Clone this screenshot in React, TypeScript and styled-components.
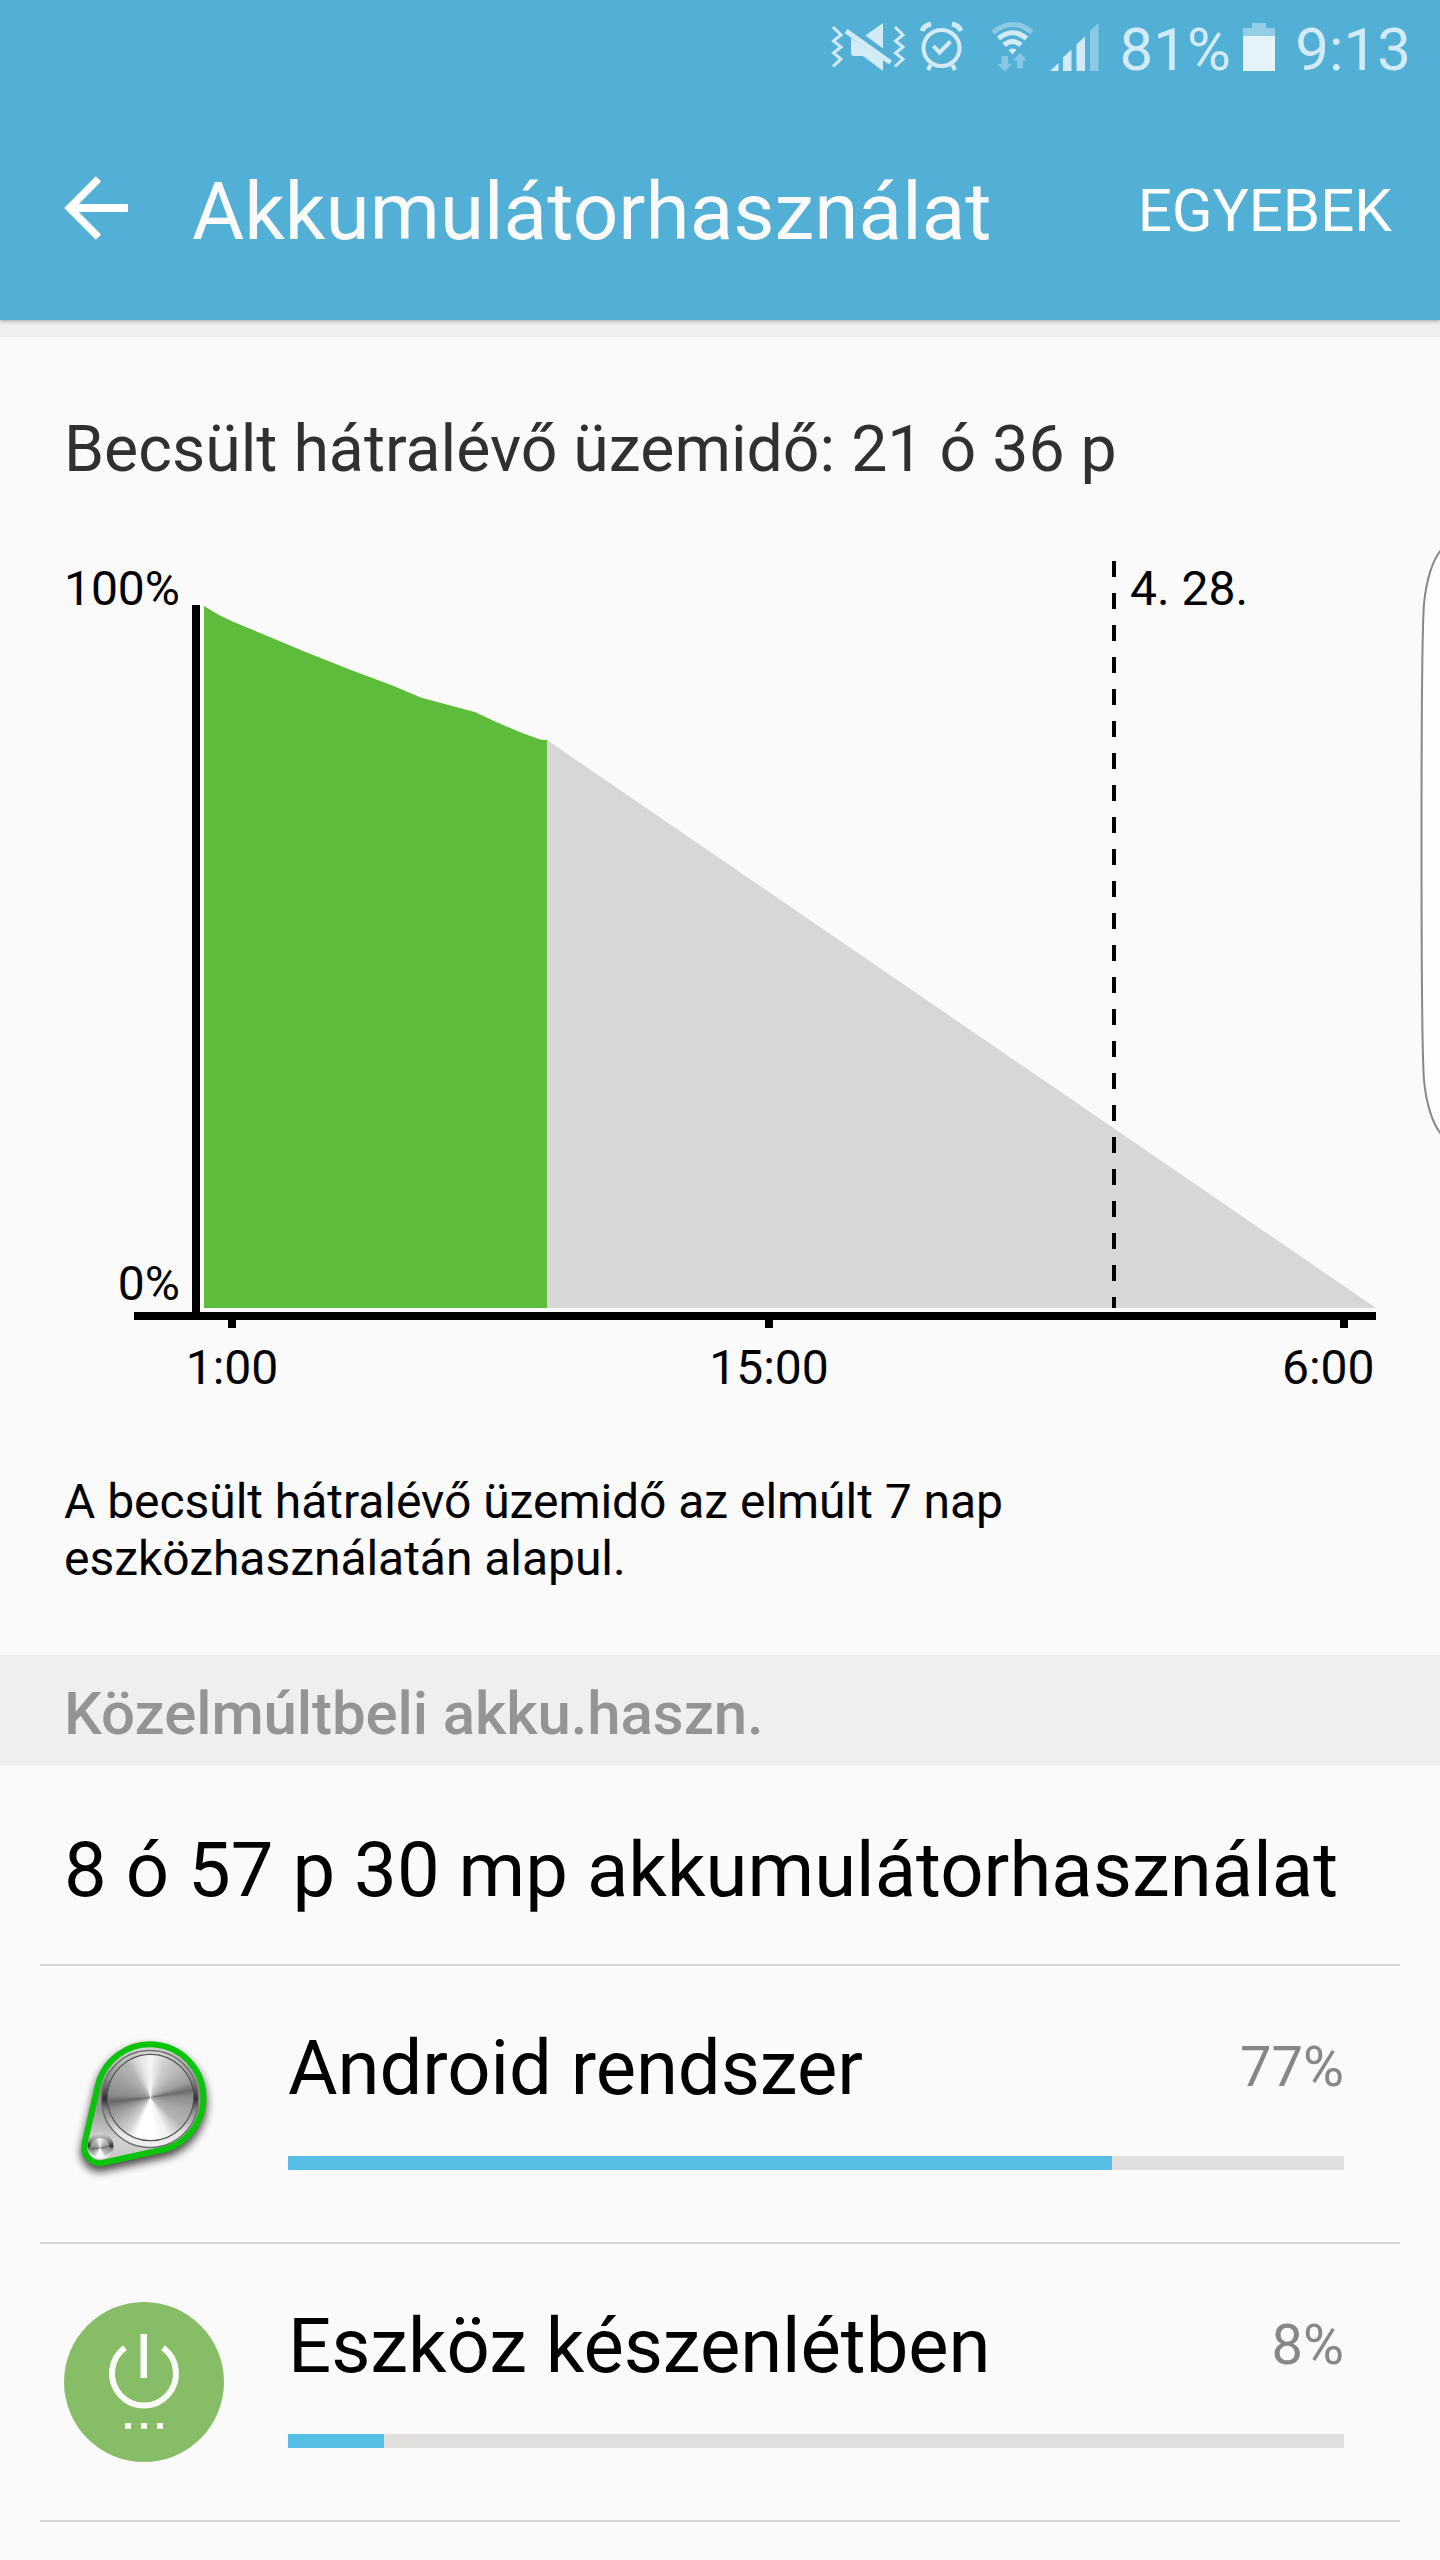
import React from 'react';
import styled, { createGlobalStyle } from 'styled-components';

const GlobalStyle = createGlobalStyle`
  *, *::before, *::after { box-sizing: border-box; }
  body { margin: 0; background: #fafafa; }
`;

const Screen = styled.div`
  position: relative;
  display: flex;
  flex-direction: column;
  width: 1440px;
  height: 2560px;
  overflow: hidden;
  background: #fafafa;
  color: #000;
  font-family: Roboto, "Noto Sans", sans-serif;
`;

const Header = styled.header`
  position: relative;
  display: flex;
  flex-direction: column;
  height: 320px;
  flex: none;
  background: #52afd5;
  box-shadow: 0 1px 4px rgba(0, 0, 0, 0.34);
`;

const StatusBar = styled.div`
  display: flex;
  justify-content: flex-end;
  height: 96px;
  padding-right: 29px;
  color: #d2ebf7;
  font-size: 60px;
  line-height: 99px;
`;

const StatusIcons = styled.svg`
  display: block;
  flex: none;
`;

const StatusText = styled.span<{ $width: number }>`
  width: ${(p) => p.$width}px;
  text-align: right;
  white-space: nowrap;
`;

const BatteryLevel = styled(StatusText)`
  margin-right: 11px;
`;

const Toolbar = styled.div`
  display: flex;
  align-items: center;
  height: 224px;
  padding: 0 48px 0 64px;
`;

const Title = styled.h1`
  flex: 1;
  margin: 0;
  padding: 7px 0 0 64px;
  color: #fafafa;
  font-size: 80px;
  font-weight: 400;
  letter-spacing: 0.07px;
  line-height: 94px;
`;

const MenuButton = styled.button`
  border: 0;
  padding: 5px 0 0;
  background: none;
  color: #fff;
  font: inherit;
  font-size: 60px;
  line-height: 72px;
`;

const Strip = styled.div`
  height: 17px;
  flex: none;
  background: #efefef;
`;

const Estimate = styled.section`
  display: flex;
  flex-direction: column;
  height: 1318px;
  flex: none;
`;

const EstimateTitle = styled.h2`
  margin: 74px 0 0 64px;
  color: #303030;
  font-size: 64.4px;
  font-weight: 400;
  line-height: 76px;
`;

const ChartSvg = styled.svg`
  display: block;
  margin-top: 53px;
  flex: none;
  font-size: 48px;
`;

const Caption = styled.p`
  margin: 73px 64px 0;
  font-size: 48px;
  letter-spacing: -0.04px;
  line-height: 57px;
`;

const SectionHeader = styled.h3`
  height: 111px;
  flex: none;
  margin: 0;
  padding-left: 64px;
  background: #efefef;
  color: #949494;
  font-size: 60px;
  font-weight: 500;
  letter-spacing: -0.09px;
  line-height: 117px;
`;

const UsageList = styled.section`
  display: flex;
  flex-direction: column;
  padding: 0 40px;
`;

const Summary = styled.div`
  height: 200px;
  padding-left: 24px;
  border-bottom: 2px solid #d8d8d8;
  font-size: 76px;
  letter-spacing: 0.06px;
  line-height: 208px;
  white-space: nowrap;
`;

const Row = styled.div`
  display: flex;
  gap: 64px;
  height: 278px;
  padding: 57px 56px 0 24px;
  border-bottom: 2px solid #d8d8d8;
`;

const RowIcon = styled.svg`
  display: block;
  flex: none;
  margin-top: 1px;
  overflow: visible;
`;

const RowBody = styled.div`
  flex: 1;
`;

const RowLine = styled.div`
  display: flex;
  justify-content: space-between;
  align-items: flex-start;
  height: 90px;
`;

const Name = styled.span`
  font-size: 76px;
  letter-spacing: -0.04px;
  line-height: 90px;
`;

const Percent = styled.span`
  color: #868788;
  font-size: 56px;
  line-height: 88px;
`;

const Track = styled.div`
  height: 14px;
  margin-top: 43px;
  background: #e1e0de;
`;

const Fill = styled.div`
  height: 100%;
  background: #56bee4;
`;

const EdgeHandle = styled.svg`
  position: absolute;
  top: 540px;
  right: 0;
`;

const BrushedMetal = styled.div`
  width: 100%;
  height: 100%;
  border-radius: 50%;
  background: conic-gradient(
    #f6f6f6 0deg, #cfcfcf 22deg, #b2b2b2 50deg, #9c9c9c 68deg, #6c6c6c 80deg, #8e8e8e 90deg,
    #a6a6a6 110deg, #b4b4b4 132deg, #f0f0f0 155deg, #fff 175deg, #fff 200deg, #d2d2d2 215deg,
    #b0b0b0 235deg, #929292 252deg, #666 264deg, #8c8c8c 274deg, #a0a0a0 300deg, #b4b4b4 325deg,
    #e4e4e4 345deg, #f6f6f6 360deg
  );
`;

function StatusGlyphs() {
  return (
    <StatusIcons width={282} height={96} viewBox="824 0 282 96" fill="#d2ebf7">
      {/* muted speaker between vibration marks */}
      <path
        d="M833 27l8 8-7.500 6 7.500 6-7.500 6 7.500 6-8 7.500M895 27l8 8-7.500 6 7.500 6-7.500 6 7.500 6-8 7.500"
        fill="none"
        stroke="#d2ebf7"
        strokeWidth="3"
      />
      <path d="M883 23v25.500L865.500 35.500zM851 38l32 21v12L863 56h-9q-3 0-3-3z" />
      <path d="M846 31l44.500 31.500" stroke="#d2ebf7" strokeWidth="5" />
      {/* alarm clock */}
      <g fill="none" stroke="#d2ebf7" strokeWidth="4">
        <circle cx="941.500" cy="48" r="18" />
        <path d="M933.500 46l6 6.500 11-11M930.500 65l-2.500 5M952.500 65l2.500 5" />
        <path d="M922 31q2-5.500 9-7M961 31q-2-5.500-9-7" strokeWidth="5" />
      </g>
      {/* wifi with traffic arrows */}
      <g fill="none" stroke="#d2ebf7" strokeWidth="5">
        <path d="M993 32.500q20-16 39 0" opacity=".45" />
        <path d="M998.500 38.500q14-11.500 28 0" />
        <path d="M1004 45q8.500-7 17 0" />
      </g>
      <path d="M1009 49.500q3.500-2 7 0v1l-3.500 4-3.500-4z" />
      <g opacity=".42">
        <path d="M1001.500 56h6.500v8h4l-7.300 7.500-7.200-7.500h4z" />
        <path d="M1017 68.500h6v-8h4L1020 53l-7.300 7.500h4.300z" />
      </g>
      {/* cellular bars */}
      <path d="M1050 71l8.500-8v8zM1063 71V57.500l8.500-8V71zM1076.500 71V44.500l8.500-8V71z" />
      <path d="M1090 71V31l8.500-8v48z" opacity=".45" />
    </StatusIcons>
  );
}

function BatteryGlyph() {
  return (
    <StatusIcons width={34} height={96} viewBox="1242 0 34 96">
      <path d="M1243 36v-8h9v-5h14v5h9v8z" fill="#94cde6" />
      <path d="M1243 36h32v35h-32z" fill="#e4f3f9" />
    </StatusIcons>
  );
}

function BackArrow() {
  return (
    <svg width={64} height={64} viewBox="0 0 64 64" fill="none" stroke="#fff">
      <path d="M34.500 2.800L5.500 32l29 29.200" strokeWidth="7.500" />
      <path d="M8 32h56" strokeWidth="8" />
    </svg>
  );
}

function Chart() {
  return (
    <ChartSvg width={1440} height={860} viewBox="0 540 1440 860">
      <path d="M547 740L1376 1308H547z" fill="#d7d7d7" />
      <path
        d="M204 606l15 9 13 6.300 35.300 14.700 41.300 17.300 43 17L391.200 685l30.300 12.700 31.700 8.600 22.400 6 18.900 9L522 733l19 6.700 6 .300v568H204z"
        fill="#5dbc3b"
      />
      <path d="M192 605h8v707h-8zM134 1312h1242v8H134zM228 1320h8v8h-8zM765 1320h8v8h-8zM1340 1320h8v8h-8z" />
      <path d="M1114 561V1308" stroke="#000" strokeWidth="4" strokeDasharray="16 16" />
      <text x="180" y="605" textAnchor="end">100%</text>
      <text x="180" y="1300" textAnchor="end">0%</text>
      <text x="1130" y="605">4. 28.</text>
      <text x="232" y="1384" textAnchor="middle">1:00</text>
      <text x="769" y="1384" textAnchor="middle">15:00</text>
      <text x="1374.500" y="1384" textAnchor="end">6:00</text>
    </ChartSvg>
  );
}

function KnobIcon() {
  return (
    <RowIcon width={160} height={160} viewBox="64 2024 160 160">
      <defs>
        <filter id="shadow" x="-30%" y="-30%" width="160%" height="160%">
          <feGaussianBlur stdDeviation="4.500" />
        </filter>
        <linearGradient id="body" x1="0" y1="0" x2="0" y2="1">
          <stop offset="0" stopColor="#d9d9d9" />
          <stop offset=".35" stopColor="#8e8e8e" />
          <stop offset=".55" stopColor="#9a9a9a" />
          <stop offset=".8" stopColor="#d2d2d2" />
          <stop offset="1" stopColor="#c4c4c4" />
        </linearGradient>
        <linearGradient id="rim" x1="0" y1="0" x2="0" y2="1">
          <stop offset="0" stopColor="#dadada" />
          <stop offset=".3" stopColor="#8a8a8a" />
          <stop offset=".5" stopColor="#2e2e2e" />
          <stop offset=".62" stopColor="#8a8a8a" />
          <stop offset=".85" stopColor="#e6e6e6" />
          <stop offset="1" stopColor="#f0f0f0" />
        </linearGradient>
      </defs>
      <path
        d="M97.800 2086A53.500 53.500 0 1 1 160 2150.300L104.500 2162.500A16 16 0 0 1 84.500 2144z"
        transform="translate(0 5)"
        fill="#000"
        stroke="#000"
        strokeWidth="7"
        opacity=".7"
        filter="url(#shadow)"
      />
      <path
        d="M97.800 2086A53.500 53.500 0 1 1 160 2150.300L104.500 2162.500A16 16 0 0 1 84.500 2144z"
        fill="url(#body)"
        stroke="#0bc30b"
        strokeWidth="6"
      />
      <circle cx="150" cy="2099" r="48.500" fill="url(#rim)" stroke="#707070" strokeWidth="1.500" />
      <circle cx="150.500" cy="2097.500" r="43" fill="#ddd" stroke="#555" strokeWidth="1.500" />
      <foreignObject x="108" y="2055" width="85" height="85">
        <BrushedMetal />
      </foreignObject>
      <circle cx="100.500" cy="2146" r="13" fill="url(#rim)" />
      <foreignObject x="90" y="2138" width="20" height="20">
        <BrushedMetal />
      </foreignObject>
    </RowIcon>
  );
}

function StandbyIcon() {
  return (
    <RowIcon width={160} height={160} viewBox="0 0 160 160">
      <circle cx="80" cy="80" r="80" fill="#87bd67" />
      <path d="M61 45.700A32 32 0 1 0 99 45.700" fill="none" stroke="#fafdf8" strokeWidth="6" />
      <path d="M76.500 32h6.500v44h-6.500zM61 121h6v6h-6zM77 121h6v6h-6zM93 121h6v6h-6z" fill="#fafdf8" />
    </RowIcon>
  );
}

const usage = [
  { name: 'Android rendszer', percent: '77%', fill: 824, icon: <KnobIcon /> },
  { name: 'Eszköz készenlétben', percent: '8%', fill: 96, icon: <StandbyIcon /> },
];

export default function App() {
  return (
    <>
      <GlobalStyle />
      <Screen>
        <Header>
          <StatusBar>
            <StatusGlyphs />
            <BatteryLevel $width={125}>81%</BatteryLevel>
            <BatteryGlyph />
            <StatusText $width={135}>9:13</StatusText>
          </StatusBar>
          <Toolbar>
            <BackArrow />
            <Title>Akkumulátorhasználat</Title>
            <MenuButton>EGYEBEK</MenuButton>
          </Toolbar>
        </Header>
        <Strip />
        <Estimate>
          <EstimateTitle>Becsült hátralévő üzemidő: 21 ó 36 p</EstimateTitle>
          <Chart />
          <Caption>
            A becsült hátralévő üzemidő az elmúlt 7 nap
            <br />
            eszközhasználatán alapul.
          </Caption>
        </Estimate>
        <SectionHeader>Közelmúltbeli akku.haszn.</SectionHeader>
        <UsageList>
          <Summary>8 ó 57 p 30 mp akkumulátorhasználat</Summary>
          {usage.map((item) => (
            <Row key={item.name}>
              {item.icon}
              <RowBody>
                <RowLine>
                  <Name>{item.name}</Name>
                  <Percent>{item.percent}</Percent>
                </RowLine>
                <Track>
                  <Fill style={{ width: `${(item.fill / 1056) * 100}%` }} />
                </Track>
              </RowBody>
            </Row>
          ))}
        </UsageList>
        <EdgeHandle width={20} height={604} viewBox="1420 540 20 604">
          <path
            d="M1442 549C1432 560 1426 582 1424 604C1422 630 1421.500 680 1421.500 842C1421.500 1004 1422 1054 1424 1080C1426 1102 1432 1124 1442 1135"
            fill="#fdfdfd"
            stroke="#888"
            strokeWidth="2"
          />
        </EdgeHandle>
      </Screen>
    </>
  );
}
